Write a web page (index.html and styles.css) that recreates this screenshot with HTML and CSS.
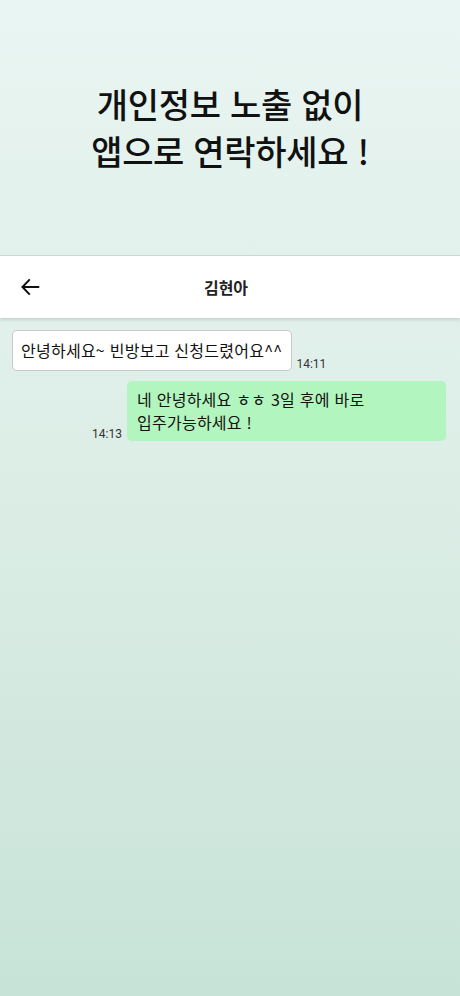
FILE: index.html
```html
<!DOCTYPE html>
<html lang="ko">
<head>
  <meta charset="UTF-8" />
  <meta name="viewport" content="width=device-width, initial-scale=1" />
  <title>채팅</title>
  <link rel="stylesheet" href="styles.css">
</head>
<body>

  <section class="hero">
    <h1>개인정보 노출 없이<br>앱으로 연락하세요 !</h1>
  </section>

  <header class="appbar">
    <button class="back" aria-label="뒤로">
      <svg width="22" height="22" viewBox="0 0 24 24" fill="none" stroke="#111" stroke-width="2.2" stroke-linecap="square">
        <path d="M21 12H4M11 4.5L3.8 12L11 19.5"/>
      </svg>
    </button>
    <div class="title">김현아</div>
  </header>

  <main class="chat">
    <div class="row row-in">
      <div class="bubble bubble-in">안녕하세요~ 빈방보고 신청드렸어요^^</div>
      <span class="time">14:11</span>
    </div>
    <div class="row row-out">
      <span class="time">14:13</span>
      <div class="bubble bubble-out">네 안녕하세요 ㅎㅎ 3일 후에 바로<br>입주가능하세요 !</div>
    </div>
  </main>

</body>
</html>
```

FILE: styles.css
```css
html, body {
  margin: 0;
  height: 100%;
}
body {
  font-family: "Noto Sans CJK KR", "Noto Sans", sans-serif;
  background: linear-gradient(#e9f5f2 0%, #dcede6 50%, #c7e3d7 100%);
  min-height: 996px;
  color: #111;
}
.hero {
  height: 255px;
  display: flex;
  align-items: center;
  justify-content: center;
}
.hero h1 {
  margin: 0 0 2px;
  text-align: center;
  font-size: 34px;
  font-weight: 500;
  line-height: 47px;
  letter-spacing: -0.3px;
  color: #111;
}
.appbar {
  height: 62px;
  background: #fff;
  border-top: 1px solid #c8d8d2;
  box-shadow: 0 2px 3px rgba(0, 0, 0, 0.12);
  display: grid;
  grid-template-columns: 60px 1fr 60px;
  align-items: center;
}
.back {
  background: none;
  border: none;
  padding: 0 0 0 19px;
  display: flex;
  align-items: center;
  cursor: pointer;
}
.title {
  text-align: center;
  font-size: 16px;
  font-weight: 700;
  color: #222;
  padding-right: 8px;
}
.chat {
  padding: 12px 14px 0 12px;
  display: flex;
  flex-direction: column;
  gap: 10px;
}
.row {
  display: flex;
  align-items: flex-end;
  gap: 4px;
}
.row-out {
  justify-content: flex-end;
  gap: 5px;
}
.bubble {
  font-size: 16px;
  line-height: 23px;
  border-radius: 5px;
  color: #111;
  letter-spacing: 0.25px;
}
.bubble-in {
  background: #fff;
  border: 1px solid #c9c9c9;
  padding: 8px 9px 8px 8px;
}
.bubble-out {
  background: #b2f5be;
  padding: 7px 10px;
  width: 299px;
}
.time {
  font-family: Roboto, "Noto Sans", sans-serif;
  font-size: 12px;
  color: #333;
  line-height: 14px;
}
```
